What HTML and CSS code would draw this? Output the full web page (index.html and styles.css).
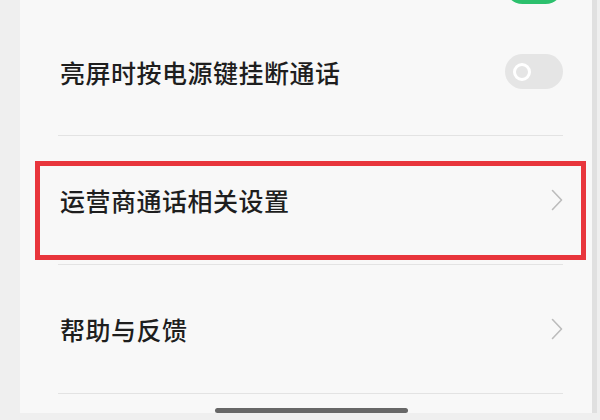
FILE: index.html
```html
<!DOCTYPE html>
<html lang="zh-CN">
<head>
<meta charset="utf-8">
<title>通话设置</title>
<link rel="stylesheet" href="styles.css">
</head>
<body>
<div class="screen">
  <div class="card">
    <div class="row row-partial">
      <div class="labels">
        <div class="subtitle">将手机靠近耳朵时自动切换为听筒模式</div>
      </div>
      <span class="switch on"><span class="knob"></span></span>
    </div>
    <div class="row first">
      <div class="title">亮屏时按电源键挂断通话</div>
      <span class="switch off"><span class="knob"></span></span>
    </div>
    <div class="divider"></div>
    <div class="row marked">
      <div class="title">运营商通话相关设置</div>
      <svg class="chevron" width="12" height="22" viewBox="0 0 12 22"><path d="M1.5 1.5 L10.5 11 L1.5 20.5" fill="none" stroke="#bcbcbc" stroke-width="1.6" stroke-linecap="round" stroke-linejoin="round"/></svg>
      <div class="highlight"></div>
    </div>
    <div class="divider"></div>
    <div class="row">
      <div class="title">帮助与反馈</div>
      <svg class="chevron" width="12" height="22" viewBox="0 0 12 22"><path d="M1.5 1.5 L10.5 11 L1.5 20.5" fill="none" stroke="#bcbcbc" stroke-width="1.6" stroke-linecap="round" stroke-linejoin="round"/></svg>
    </div>
    <div class="divider"></div>
    <div class="home-bar"></div>
  </div>
  <div class="edge"></div>
</div>
</body>
</html>
```

FILE: styles.css
```css
html, body {
  margin: 0;
  padding: 0;
  background: #efefef;
}

.screen {
  width: 600px;
  height: 420px;
  overflow: hidden;
  display: flex;
  align-items: flex-start;
  background: #efefef;
  font-family: "Noto Sans CJK SC", "Noto Sans", sans-serif;
}

.card {
  position: relative;
  margin-left: 20px;
  width: 572px;
  height: 413px;
  background: #f8f8f8;
  display: flex;
  flex-direction: column;
  overflow: hidden;
}

.edge {
  width: 5px;
  height: 413px;
  background: #e0e0e0;
}

.row {
  position: relative;
  height: 128px;
  display: flex;
  align-items: center;
  justify-content: space-between;
  padding: 0 29px 0 40px;
  flex-shrink: 0;
}

.row-partial {
  box-sizing: border-box;
  height: 50px;
  margin-top: -42px;
  align-items: flex-end;
  padding-bottom: 4px;
}

.row.first {
  height: 127px;
}

.labels {
  display: flex;
  flex-direction: column;
  margin-bottom: 8px;
}

.title {
  font-size: 25px;
  font-weight: 500;
  letter-spacing: 0.5px;
  color: #1e1e1e;
  line-height: 1.2;
}

.subtitle {
  font-size: 16px;
  color: #a8a8a8;
  line-height: 1.2;
}

.switch {
  position: relative;
  width: 58px;
  height: 35px;
  border-radius: 18px;
  display: flex;
  align-items: center;
  flex-shrink: 0;
}

.switch.off {
  background: #e5e5e5;
}

.switch.on {
  background: #2cc06d;
  justify-content: flex-end;
}

.switch .knob {
  box-sizing: border-box;
  width: 18px;
  height: 18px;
  border-radius: 50%;
  margin: 0 8px;
}

.switch.off .knob {
  border: 3px solid #ffffff;
}

.switch.on .knob {
  background: #ffffff;
}

.chevron {
  display: block;
  flex-shrink: 0;
}

.divider {
  height: 1px;
  margin: 0 29px 0 38px;
  background: #e3e3e3;
  flex-shrink: 0;
}

.highlight {
  position: absolute;
  left: 15px;
  right: 6px;
  top: 25px;
  height: 99px;
  box-sizing: border-box;
  border: 5px solid #e8353c;
}

.home-bar {
  position: absolute;
  left: 195px;
  bottom: 0;
  width: 193px;
  height: 5px;
  border-radius: 3px;
  background: #676767;
}
```
